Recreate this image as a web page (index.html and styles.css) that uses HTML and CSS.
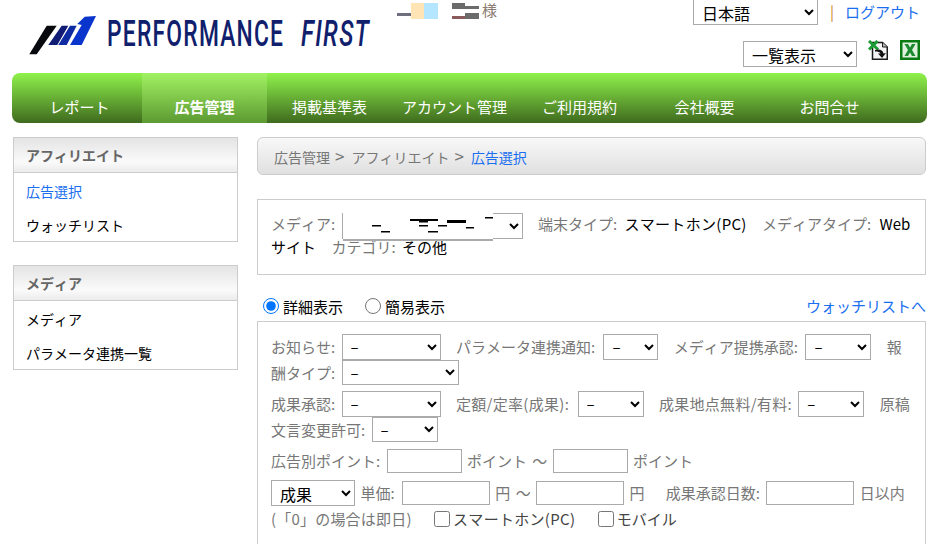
FILE: index.html
```html
<!DOCTYPE html>
<html lang="ja">
<head>
<meta charset="utf-8">
<title>Performance First</title>
<link rel="stylesheet" href="styles.css">
</head>
<body>
<div class="page">
  <header class="header">
    <div class="logo">
      <svg class="logo-mark" width="70" height="40" viewBox="0 0 70 40">
        <polygon points="18.700,9.700 28.700,9.700 8.700,38.300 1.300,38.300" fill="#08080f"/>
        <polygon points="33.700,9.700 40.300,9.700 29.300,29 20.300,29" fill="#111c74"/>
        <polygon points="42,9.700 48.700,9.700 38.700,29 30.300,29" fill="#0f2ba2"/>
        <polygon points="49.300,8 56.700,0.700 68,0 53.700,29 42,29 53.700,9" fill="#0a35cc"/>
      </svg>
      <span class="logo-text">PERFORMANCE</span>
      <span class="logo-text logo-first">FIRST</span>
    </div>
    <div class="user">
      <svg class="user-redact" width="85" height="17" viewBox="0 0 85 17">
        <rect x="0" y="10" width="14" height="3" fill="#6f6f80"/>
        <rect x="14" y="0" width="13" height="16" fill="#ffe4b5"/>
        <rect x="27" y="0" width="14" height="16" fill="#b5e6ff"/>
        <rect x="55" y="0" width="13" height="6" fill="#6b6b6b"/>
        <rect x="55" y="3" width="27" height="3" fill="#6b6b6b"/>
        <rect x="68" y="10" width="14" height="6" fill="#6b6b6b"/>
        <rect x="55" y="13" width="13" height="3" fill="#8a5a5a"/>
      </svg>
      <span class="user-suffix">様</span>
    </div>
    <div class="tools">
      <div class="tools-row">
        <select class="select lang"><option>日本語</option></select>
        <span class="sep">|</span>
        <a class="link logout" href="#">ログアウト</a>
      </div>
      <div class="tools-row tools-view">
        <select class="select view"><option>一覧表示</option></select>
        <svg class="icon" width="20" height="20" viewBox="0 0 20 20">
          <path d="M4.500 2.500H14.500L19.250 7V19.250H4.500Z" fill="#f4f4f4" stroke="#1a1a1a" stroke-width="1.500"/>
          <path d="M14.500 2.500V7H19.250" fill="#bbb" stroke="#1a1a1a"/>
          <path d="M1 1L10 9.500M9.500 1L1 9.500" stroke="#1c9a34" stroke-width="3" fill="none"/>
          <path d="M7 10C11 8.500 15 10 15.500 13.500L18 13L14 18L10 13.500L12.500 13.500C12 12 10 11.500 7 11.500Z" fill="#111"/>
        </svg>
        <svg class="icon" width="20" height="20" viewBox="0 0 20 20">
          <rect width="20" height="20" fill="#0a7a12"/>
          <rect x="2.500" y="2.500" width="15" height="15" fill="#dff0df"/>
          <path d="M4.500 4H8L10 7.500L12 4H15.500L12 10L15.500 16H12L10 12.500L8 16H4.500L8 10Z" fill="#1c8a2e"/>
        </svg>
      </div>
    </div>
  </header>

  <nav class="nav">
    <a class="nav-item" href="#">レポート</a>
    <a class="nav-item nav-active" href="#">広告管理</a>
    <a class="nav-item" href="#">掲載基準表</a>
    <a class="nav-item" href="#">アカウント管理</a>
    <a class="nav-item" href="#">ご利用規約</a>
    <a class="nav-item" href="#">会社概要</a>
    <a class="nav-item" href="#">お問合せ</a>
  </nav>

  <div class="body">
    <aside class="side">
      <section class="side-box">
        <h2 class="side-head">アフィリエイト</h2>
        <a class="side-item link" href="#">広告選択</a>
        <a class="side-item" href="#">ウォッチリスト</a>
      </section>
      <section class="side-box">
        <h2 class="side-head">メディア</h2>
        <a class="side-item" href="#">メディア</a>
        <a class="side-item" href="#">パラメータ連携一覧</a>
      </section>
    </aside>

    <main class="main">
      <div class="crumb">広告管理<span class="gt">&gt;</span>アフィリエイト<span class="gt">&gt;</span><a class="link" href="#">広告選択</a></div>

      <div class="panel media">
        <span class="lbl c">メディア:</span>
        <span class="media-select">
          <select class="select media-sel"><option>メディア名</option></select>
          <svg class="redact" width="150" height="28" viewBox="0 0 150 28">
            <rect width="150" height="28" fill="#fff"/>
            <rect y="26" width="150" height="2" fill="#aaa"/>
            <g fill="#000">
              <rect x="29" y="12" width="9" height="1.500"/>
              <rect x="38" y="18" width="9" height="1.500"/>
              <rect x="67" y="6" width="28" height="2"/>
              <rect x="76" y="8" width="9" height="1.500"/>
              <rect x="76" y="12" width="9" height="1.500"/>
              <rect x="85" y="18" width="10" height="1.500"/>
              <rect x="95" y="12" width="9" height="1.500"/>
              <rect x="104" y="7" width="19" height="3"/>
              <rect x="123" y="14" width="8" height="1.500"/>
              <rect x="142" y="4" width="8" height="1.500"/>
            </g>
          </svg>
        </span>
        <span class="lbl gap c2">端末タイプ:</span> <span class="val sl">スマートホン(PC)</span>
        <span class="lbl gap c3">メディアタイプ:</span> <span class="val">Webサイト</span>
        <span class="lbl gap c">カテゴリ:</span> <span class="val">その他</span>
      </div>

      <div class="modes">
        <label class="mode"><input type="radio" name="mode" checked>詳細表示</label>
        <label class="mode"><input type="radio" name="mode">簡易表示</label>
        <a class="link modes-link" href="#">ウォッチリストへ</a>
      </div>

      <form class="panel search">
        <div class="row">
          <span class="lbl c">お知らせ:</span>
          <select class="select w99"><option>–</option></select>
          <span class="lbl gap c3">パラメータ連携通知:</span>
          <select class="select w55"><option>–</option></select>
          <span class="lbl gap c2">メディア提携承認:</span>
          <select class="select w66"><option>–</option></select>
          <span class="lbl gap c">報酬タイプ:</span>
          <select class="select w117"><option>–</option></select>
        </div>
        <div class="row">
          <span class="lbl c">成果承認:</span>
          <select class="select w99"><option>–</option></select>
          <span class="lbl gap c3 sl">定額/定率(成果):</span>
          <select class="select w66"><option>–</option></select>
          <span class="lbl gap c sl">成果地点無料/有料:</span>
          <select class="select w66"><option>–</option></select>
          <span class="lbl gap c">原稿文言変更許可:</span>
          <select class="select w66"><option>–</option></select>
        </div>
        <div class="row">
          <span class="lbl c">広告別ポイント:</span>
          <input class="input w75" type="text">
          <span class="lbl">ポイント ～</span>
          <input class="input w75" type="text">
          <span class="lbl">ポイント</span>
        </div>
        <div class="row">
          <select class="select w84 big"><option>成果</option></select>
          <span class="lbl c2">単価:</span>
          <input class="input w88" type="text">
          <span class="lbl">円 ～</span>
          <input class="input w88" type="text">
          <span class="lbl">円</span>
          <span class="lbl gap wide c">成果承認日数:</span>
          <input class="input w88" type="text">
          <span class="lbl">日以内</span>
          <span class="lbl nowrap spaced">(「0」の場合は即日)</span>
          <label class="check sl"><input type="checkbox">スマートホン(PC)</label>
          <label class="check"><input type="checkbox">モバイル</label>
        </div>
      </form>
    </main>
  </div>
</div>
</body>
</html>
```
FILE: styles.css
```css
* { box-sizing: border-box; }
html, body { margin: 0; padding: 0; height: 544px; overflow: hidden; background: #fff; }
body { font-family: "Noto Sans CJK JP", "Noto Sans", sans-serif; font-size: 15px; color: #000; line-height: 24px; font-kerning: none; }
a { text-decoration: none; color: inherit; }
.link { color: #1a6ff0; }

.page { width: 938px; }

.header { display: flex; height: 73px; padding-left: 28px; }
.logo { display: flex; align-items: flex-start; width: 369px; padding-top: 16px; }
.logo-mark { flex: none; margin-right: 9px; }
.logo-text { flex: none; display: block; width: 177px; font-family: "Roboto", sans-serif; font-weight: 500; font-size: 36.5px; line-height: 36px; color: #10206c; letter-spacing: 2px; white-space: nowrap; transform: scaleX(.625); transform-origin: left; }
.logo-first { width: 68px; margin-left: 17px; font-style: italic; transform: scaleX(.66); }
.user { display: flex; align-items: flex-start; padding-top: 3px; width: 280px; }
.user-suffix { color: #8a7a70; font-size: 15px; line-height: 16px; margin-top: -1px; }
.tools { flex: 1; display: flex; flex-direction: column; align-items: flex-end; padding-right: 18px; margin-top: -1px; }
.tools-row { display: flex; align-items: center; }
.tools-view { margin-top: 16px; }
.sep { color: #d08a30; margin: 0 11px 0 12px; }
.logout { white-space: nowrap; }
.select { font-family: inherit; font-size: 15px; height: 25.6px; background: #fff; border: 1px solid #aaa; color: #000; padding: 0 0 0 4px; }
.lang { width: 125px; height: 26px; font-size: 16px; }
.view { width: 114px; height: 26px; font-size: 16px; }
.icon { flex: none; align-self: flex-start; margin: -1px 0 0 11px; }
.icon + .icon { margin-left: 12px; }

.nav { display: flex; margin: 0 11px 0 12px; height: 50px; padding-left: 5px; border-radius: 8px; background: linear-gradient(#8ff24b, #3f6a1e); }
.nav-item { width: 125px; color: #fff; text-align: center; padding-top: 22px; line-height: 24px; }
.nav-active { font-weight: 700; background: linear-gradient(#a2f263, #5c9a32); }

.body { display: flex; margin-top: 14px; padding-left: 13px; }
.side { width: 225px; display: flex; flex-direction: column; gap: 23px; }
.side-box { border: 1px solid #ccc; height: 105px; }
.side-head { margin: 0; height: 35px; border-bottom: 1px solid #ccc; padding-left: 12px; font-size: 14px; line-height: 35px; font-weight: 700; color: #666; background: linear-gradient(#e4e4e4, #fafafa 70%, #ececec); }
.side-item { display: block; height: 34px; line-height: 36px; padding-left: 12px; font-size: 14px; }

.main { width: 669px; margin-left: 19px; }
.crumb { height: 38px; border: 1px solid #ccc; border-radius: 6px; padding-left: 16px; font-size: 14px; line-height: 35px; color: #777; background: linear-gradient(#f8f8f8, #e0e0e0); }
.gt { font-size: 17px; margin: 0 7px 0 5px; }
.panel { border: 1px solid #ccc; }
.media { margin-top: 24px; height: 76px; padding: 13px 13px 0; line-height: 16px; word-spacing: 2px; }
.lbl { color: #777; }
.c { margin-right: 1px; }
.c2 { margin-right: 2px; }
.c3 { margin-right: 3px; }
.sl { letter-spacing: .3px; }
.gap { margin-left: 10px; }
.wide { margin-left: 16px; }
.nowrap { white-space: nowrap; }
.spaced { text-spacing-trim: space-all; letter-spacing: .2px; }
.media-select { position: relative; display: inline-block; vertical-align: middle; }
.media-sel { width: 181px; height: 25.6px; display: block; }
.redact { position: absolute; left: 1px; top: 0; }

.modes { display: flex; align-items: center; height: 46px; padding: 16px 0 0 6px; }
.mode { display: flex; align-items: center; margin: 2px 22px 0 0; }
.mode input { margin: 0 4px 2px 0; width: 16px; height: 16px; }
.modes-link { margin-left: auto; }

.search { padding: 12px 13px 0; height: 240px; word-spacing: 2px; }
.row { margin-bottom: 6px; line-height: 25.6px; }
.row .select { vertical-align: top; }
.row .input { vertical-align: top; margin-top: 1px; }
.input { height: 24px; border: 1px solid #aaa; padding: 0 4px; font: inherit; }
.w55 { width: 55px; }
.w66 { width: 66px; }
.w75 { width: 75px; }
.w84 { width: 84px; }
.w88 { width: 88px; }
.w99 { width: 99px; }
.w117 { width: 117px; }
.big { font-size: 16px; }
.check { margin-left: 17px; white-space: nowrap; color: #444; }
.check input { margin: 0 3px 0 0; width: 16px; height: 16px; vertical-align: -2px; }
```
